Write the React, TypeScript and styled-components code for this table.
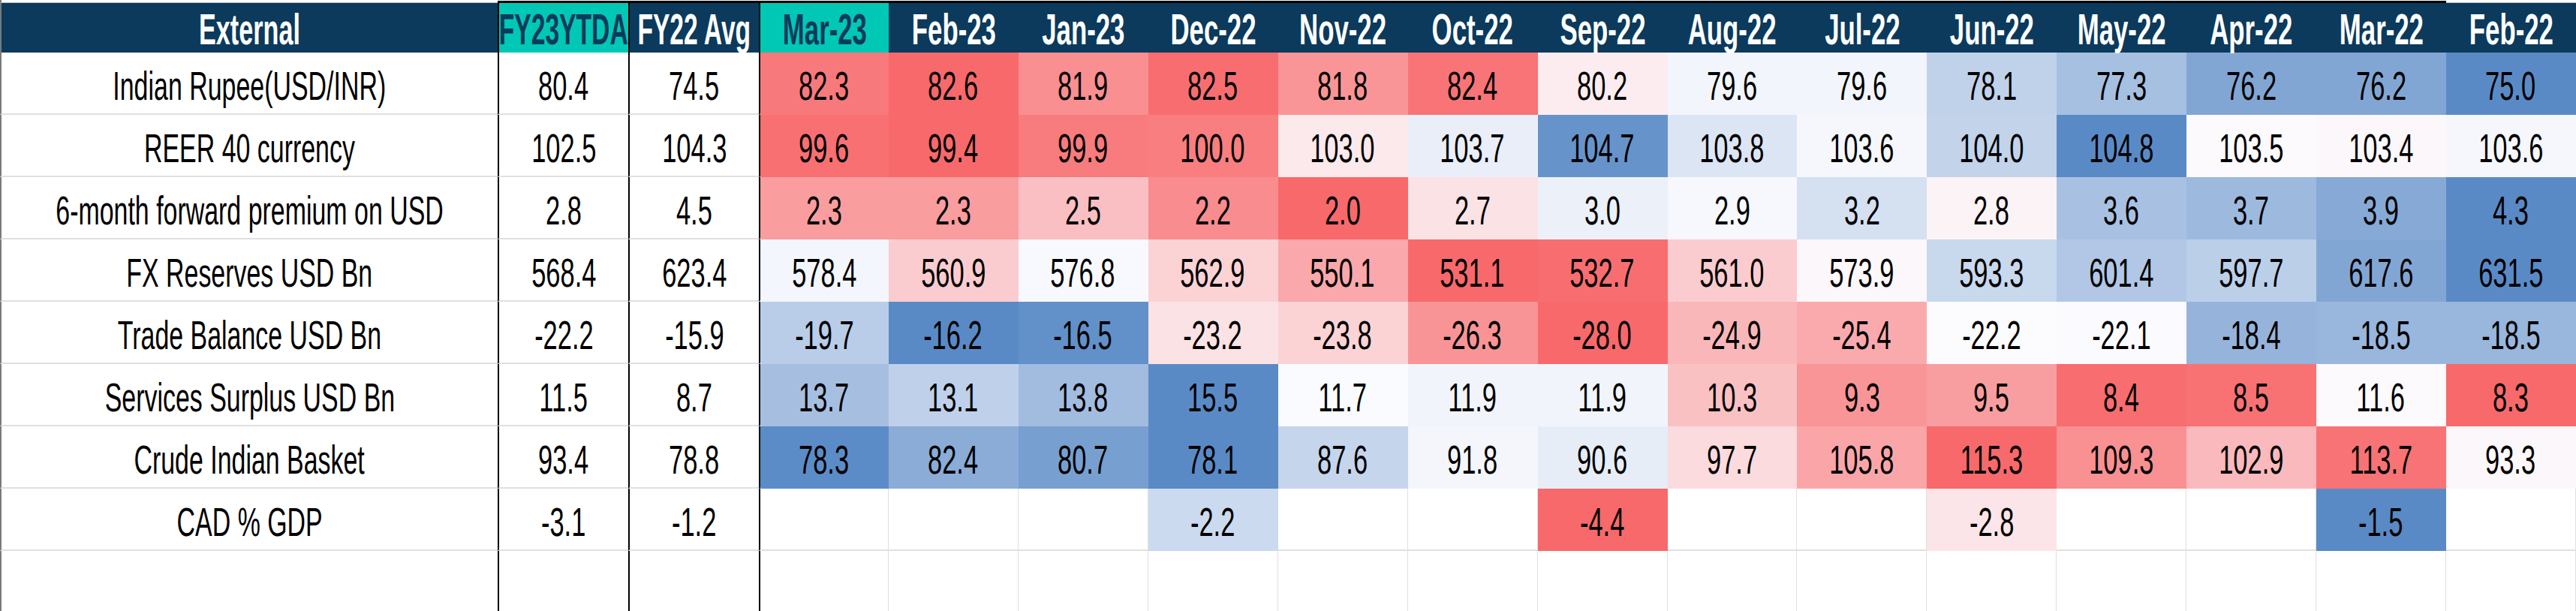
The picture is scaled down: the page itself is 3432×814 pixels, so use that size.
import React from 'react';
import styled, { createGlobalStyle } from 'styled-components';

const GlobalStyle = createGlobalStyle`
  html, body {
    margin: 0;
    padding: 0;
    background: #fff;
    overflow: hidden;
  }
  body {
    font-family: "Liberation Sans", Arial, sans-serif;
    color: #000;
  }
`;

const NAVY = '#0b3a5c';
const TEAL = '#00c8b4';
const GRID = '#e0e0e0';

// Excel 3-colour scale: red - white - blue, midpoint at the median
const RED = [248, 105, 107];
const MID = [252, 252, 255];
const BLUE = [90, 138, 198];

const MONTHS = [
  'Mar-23', 'Feb-23', 'Jan-23', 'Dec-22', 'Nov-22', 'Oct-22', 'Sep-22',
  'Aug-22', 'Jul-22', 'Jun-22', 'May-22', 'Apr-22', 'Mar-22', 'Feb-22',
];

interface RowData {
  label: string;
  ytd: string;
  avg: string;
  values: (number | null)[];
  highIsRed: boolean;
}

const ROWS: RowData[] = [
  {
    label: 'Indian Rupee(USD/INR)', ytd: '80.4', avg: '74.5', highIsRed: true,
    values: [82.3, 82.6, 81.9, 82.5, 81.8, 82.4, 80.2, 79.6, 79.6, 78.1, 77.3, 76.2, 76.2, 75.0],
  },
  {
    label: 'REER 40 currency', ytd: '102.5', avg: '104.3', highIsRed: false,
    values: [99.6, 99.4, 99.9, 100.0, 103.0, 103.7, 104.7, 103.8, 103.6, 104.0, 104.8, 103.5, 103.4, 103.6],
  },
  {
    label: '6-month forward premium on USD', ytd: '2.8', avg: '4.5', highIsRed: false,
    values: [2.3, 2.3, 2.5, 2.2, 2.0, 2.7, 3.0, 2.9, 3.2, 2.8, 3.6, 3.7, 3.9, 4.3],
  },
  {
    label: 'FX Reserves USD Bn', ytd: '568.4', avg: '623.4', highIsRed: false,
    values: [578.4, 560.9, 576.8, 562.9, 550.1, 531.1, 532.7, 561.0, 573.9, 593.3, 601.4, 597.7, 617.6, 631.5],
  },
  {
    label: 'Trade Balance USD Bn', ytd: '-22.2', avg: '-15.9', highIsRed: false,
    values: [-19.7, -16.2, -16.5, -23.2, -23.8, -26.3, -28.0, -24.9, -25.4, -22.2, -22.1, -18.4, -18.5, -18.5],
  },
  {
    label: 'Services Surplus USD Bn', ytd: '11.5', avg: '8.7', highIsRed: false,
    values: [13.7, 13.1, 13.8, 15.5, 11.7, 11.9, 11.9, 10.3, 9.3, 9.5, 8.4, 8.5, 11.6, 8.3],
  },
  {
    label: 'Crude Indian Basket', ytd: '93.4', avg: '78.8', highIsRed: true,
    values: [78.3, 82.4, 80.7, 78.1, 87.6, 91.8, 90.6, 97.7, 105.8, 115.3, 109.3, 102.9, 113.7, 93.3],
  },
  {
    label: 'CAD % GDP', ytd: '-3.1', avg: '-1.2', highIsRed: false,
    values: [null, null, null, -2.2, null, null, -4.4, null, null, -2.8, null, null, -1.5, null],
  },
];

const lerp = (a: number[], b: number[], t: number) =>
  `rgb(${a.map((v, i) => Math.round(v + (b[i] - v) * t)).join(',')})`;

function rowColors(row: RowData): (string | null)[] {
  const nums = row.values.filter((v): v is number => v !== null).sort((a, b) => a - b);
  const min = nums[0];
  const max = nums[nums.length - 1];
  const m = nums.length;
  const med = m % 2 ? nums[(m - 1) / 2] : (nums[m / 2 - 1] + nums[m / 2]) / 2;
  const hi = row.highIsRed ? RED : BLUE;
  const lo = row.highIsRed ? BLUE : RED;
  return row.values.map((v) => {
    if (v === null) return null;
    if (v >= med) return lerp(MID, hi, max === med ? 0 : (v - med) / (max - med));
    return lerp(MID, lo, med === min ? 0 : (med - v) / (med - min));
  });
}

const Sheet = styled.div`
  display: grid;
  grid-template-columns: 663px 174px 174px repeat(14, minmax(0, 1fr));
  grid-template-rows: 4px 66px repeat(8, 83px) minmax(0, 1fr);
  width: 100vw;
  height: 100vh;
`;

const TopEdge = styled.div<{ $black?: boolean; $first?: boolean }>`
  box-sizing: border-box;
  border-bottom: ${(p) => (p.$black ? '3px solid #000' : '1px solid #c4c4c4')};
  border-left: ${(p) => (p.$first ? '2px solid #7a7a7a' : 'none')};
`;

const HeadCell = styled.div<{ $teal?: boolean; $divider?: boolean; $edge?: boolean }>`
  box-sizing: border-box;
  min-width: 0;
  display: flex;
  align-items: center;
  justify-content: center;
  padding-top: 5px;
  background: ${(p) => (p.$teal ? TEAL : NAVY)};
  color: ${(p) => (p.$teal ? NAVY : '#fff')};
  font-weight: 700;
  font-size: 57px;
  border-left: ${(p) => (p.$edge ? '2px solid #7a7a7a' : p.$divider ? '2px solid #000' : 'none')};
`;

const Text = styled.span<{ $sx: number }>`
  display: inline-block;
  flex: none;
  white-space: nowrap;
  line-height: 1;
  transform: scaleX(${(p) => p.$sx});
`;

const LabelCell = styled.div<{ $last?: boolean }>`
  box-sizing: border-box;
  min-width: 0;
  display: flex;
  align-items: center;
  justify-content: center;
  padding-top: 8px;
  font-size: 53px;
  border-left: 2px solid #7a7a7a;
  border-bottom: ${(p) => (p.$last ? 'none' : `2px solid ${GRID}`)};
`;

const StatCell = styled.div<{ $last?: boolean }>`
  box-sizing: border-box;
  min-width: 0;
  display: flex;
  align-items: center;
  justify-content: center;
  padding-top: 8px;
  font-size: 53px;
  border-left: 2px solid #000;
  border-bottom: ${(p) => (p.$last ? 'none' : `2px solid ${GRID}`)};
`;

const MonthCell = styled.div<{ $first?: boolean; $last?: boolean }>`
  box-sizing: border-box;
  min-width: 0;
  display: flex;
  align-items: center;
  justify-content: center;
  padding-top: 8px;
  font-size: 53px;
  background: #fff;
  border-left: ${(p) => (p.$first ? '2px solid #000' : 'none')};
  border-right: 1px solid ${GRID};
  border-bottom: ${(p) => (p.$last ? 'none' : `2px solid ${GRID}`)};
`;

const App: React.FC = () => {
  const colors = ROWS.map(rowColors);
  return (
    <>
      <GlobalStyle />
      <Sheet>
        <TopEdge $first />
        <TopEdge $black />
        <TopEdge $black />
        {MONTHS.map((m, i) => (
          <TopEdge key={m} $black={i < MONTHS.length - 1} />
        ))}

        <HeadCell $edge>
          <Text $sx={0.6}>External</Text>
        </HeadCell>
        <HeadCell $teal $divider>
          <Text $sx={0.59}>FY23YTDA</Text>
        </HeadCell>
        <HeadCell $divider>
          <Text $sx={0.59}>FY22 Avg</Text>
        </HeadCell>
        {MONTHS.map((m, i) => (
          <HeadCell key={m} $teal={i === 0} $divider={i === 0}>
            <Text $sx={0.61}>{m}</Text>
          </HeadCell>
        ))}

        {ROWS.map((row, r) => (
          <React.Fragment key={row.label}>
            <LabelCell>
              <Text $sx={0.64}>{row.label}</Text>
            </LabelCell>
            <StatCell>
              <Text $sx={0.65}>{row.ytd}</Text>
            </StatCell>
            <StatCell>
              <Text $sx={0.65}>{row.avg}</Text>
            </StatCell>
            {row.values.map((v, i) => {
              const fill = colors[r][i];
              return (
                <MonthCell
                  key={MONTHS[i]}
                  $first={i === 0}
                  style={fill ? { background: fill, borderRightColor: fill, borderBottomColor: fill } : undefined}
                >
                  {v !== null && <Text $sx={0.65}>{v.toFixed(1)}</Text>}
                </MonthCell>
              );
            })}
          </React.Fragment>
        ))}

        <LabelCell $last />
        <StatCell $last />
        <StatCell $last />
        {MONTHS.map((m, i) => (
          <MonthCell key={m} $first={i === 0} $last />
        ))}
      </Sheet>
    </>
  );
};

export default App;
